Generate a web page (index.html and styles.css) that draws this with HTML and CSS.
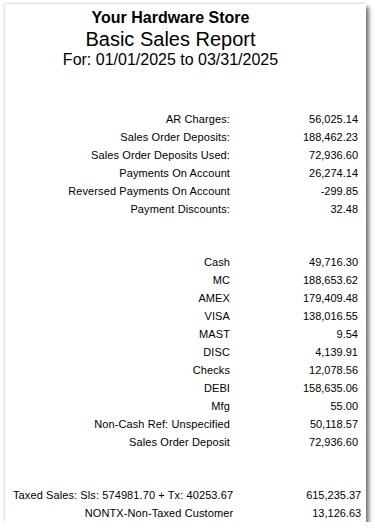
FILE: index.html
```html
<!DOCTYPE html>
<html>
<head>
<meta charset="utf-8">
<link rel="stylesheet" href="styles.css">
</head>
<body>
<div class="page">
  <div class="head">
    <div class="store">Your Hardware Store</div>
    <div class="title">Basic Sales Report</div>
    <div class="range">For: 01/01/2025 to 03/31/2025</div>
  </div>
  <div class="rows sec1">
    <span class="l">AR Charges:</span><span class="v">56,025.14</span>
    <span class="l">Sales Order Deposits:</span><span class="v">188,462.23</span>
    <span class="l">Sales Order Deposits Used:</span><span class="v">72,936.60</span>
    <span class="l">Payments On Account</span><span class="v">26,274.14</span>
    <span class="l">Reversed Payments On Account</span><span class="v">-299.85</span>
    <span class="l">Payment Discounts:</span><span class="v">32.48</span>
  </div>
  <div class="rows sec2">
    <span class="l">Cash</span><span class="v">49,716.30</span>
    <span class="l">MC</span><span class="v">188,653.62</span>
    <span class="l">AMEX</span><span class="v">179,409.48</span>
    <span class="l">VISA</span><span class="v">138,016.55</span>
    <span class="l">MAST</span><span class="v">9.54</span>
    <span class="l">DISC</span><span class="v">4,139.91</span>
    <span class="l">Checks</span><span class="v">12,078.56</span>
    <span class="l">DEBI</span><span class="v">158,635.06</span>
    <span class="l">Mfg</span><span class="v">55.00</span>
    <span class="l">Non-Cash Ref: Unspecified</span><span class="v">50,118.57</span>
    <span class="l">Sales Order Deposit</span><span class="v">72,936.60</span>
  </div>
  <div class="rows sec3">
    <span class="l">Taxed Sales: Sls: 574981.70 + Tx: 40253.67</span><span class="v">615,235.37</span>
    <span class="l">NONTX-Non-Taxed Customer</span><span class="v">13,126.63</span>
  </div>
</div>
</body>
</html>
```
FILE: styles.css
```css
html, body {
  margin: 0;
  padding: 0;
  background: #ffffff;
}
body {
  font-family: "Liberation Sans", Arial, sans-serif;
  color: #000;
}
.page {
  margin: 4px 0 0 5px;
  width: 361px;
  height: 518px;
  box-sizing: border-box;
  background: #fff;
  box-shadow: 3px 3px 4px rgba(0,0,0,0.55), -1px -1px 2px rgba(0,0,0,0.12);
  padding: 5px 8px 0 8px;
}
.head {
  text-align: center;
  padding-right: 30px;
}
.store {
  font-weight: bold;
  font-size: 16px;
  line-height: 18px;
}
.title {
  font-size: 20px;
  line-height: 24px;
}
.range {
  font-size: 16px;
  line-height: 18px;
}
.rows {
  display: grid;
  grid-template-columns: 1fr 128px;
  grid-auto-rows: 18px;
  font-size: 11px;
  align-items: center;
}
.l { text-align: right; white-space: nowrap; letter-spacing: 0.1px; }
.v { text-align: right; }
.sec1 { margin-top: 41px; }
.sec2 { margin-top: 35px; }
.sec3 { margin-top: 35px; }
```
